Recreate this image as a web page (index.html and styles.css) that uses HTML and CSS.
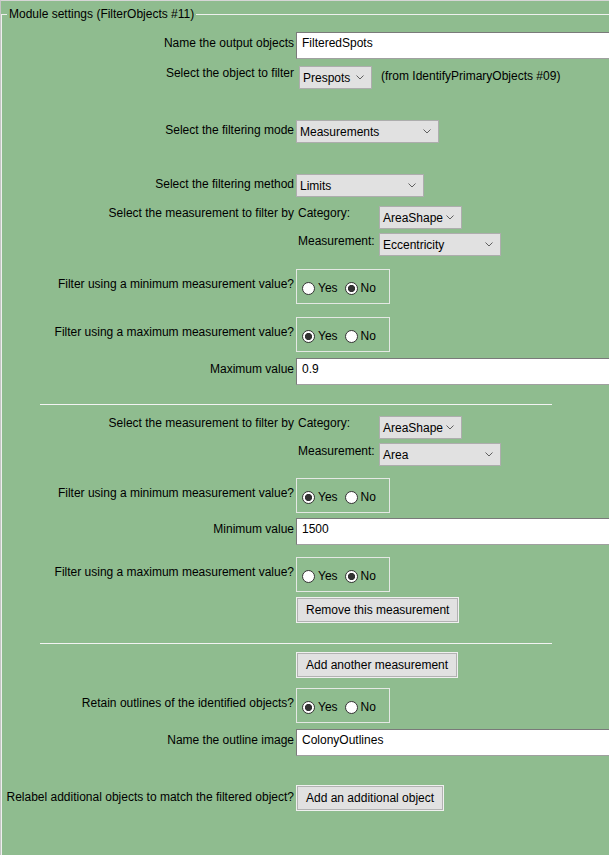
FILE: index.html
```html
<!DOCTYPE html>
<html>
<head>
<meta charset="utf-8">
<title>FilterObjects settings</title>
<link rel="stylesheet" href="styles.css">
</head>
<body>
<div class="panel">
  <fieldset class="settings">
    <legend class="legend">Module settings (FilterObjects #11)</legend>

    <div class="row sp-11 for-input">
      <div class="label">Name the output objects</div>
      <div class="textbox">FilteredSpots</div>
    </div>

    <div class="row sp-7 for-tight">
      <div class="label">Select the object to filter</div>
      <div class="inline">
        <div class="select w-prespots"><span>Prespots</span><svg class="chev" width="8" height="5" viewBox="0 0 8 5"><path d="M0.5 0.5 L4 4 L7.5 0.5"/></svg></div>
        <span class="note">(from IdentifyPrimaryObjects #09)</span>
      </div>
    </div>

    <div class="row sp-31 for-select">
      <div class="label">Select the filtering mode</div>
      <div class="select w-mode"><span>Measurements</span><svg class="chev" width="8" height="5" viewBox="0 0 8 5"><path d="M0.5 0.5 L4 4 L7.5 0.5"/></svg></div>
    </div>

    <div class="row sp-31 for-select">
      <div class="label">Select the filtering method</div>
      <div class="select w-method"><span>Limits</span><svg class="chev" width="8" height="5" viewBox="0 0 8 5"><path d="M0.5 0.5 L4 4 L7.5 0.5"/></svg></div>
    </div>

    <div class="row sp-9 for-picker">
      <div class="label">Select the measurement to filter by</div>
      <div class="picker">
        <div class="picker-label">Category:</div>
        <div class="select w-cat"><span>AreaShape</span><svg class="chev" width="8" height="5" viewBox="0 0 8 5"><path d="M0.5 0.5 L4 4 L7.5 0.5"/></svg></div>
        <div class="picker-label second">Measurement:</div>
        <div class="select w-meas"><span>Eccentricity</span><svg class="chev" width="8" height="5" viewBox="0 0 8 5"><path d="M0.5 0.5 L4 4 L7.5 0.5"/></svg></div>
      </div>
    </div>

    <div class="row sp-13 for-radio">
      <div class="label">Filter using a minimum measurement value?</div>
      <div class="radios"><span class="radio"><span class="dot"></span>Yes</span><span class="radio on"><span class="dot"></span>No</span></div>
    </div>

    <div class="row sp-13 for-radio">
      <div class="label">Filter using a maximum measurement value?</div>
      <div class="radios"><span class="radio on"><span class="dot"></span>Yes</span><span class="radio"><span class="dot"></span>No</span></div>
    </div>

    <div class="row sp-6 for-input">
      <div class="label">Maximum value</div>
      <div class="textbox">0.9</div>
    </div>

    <div class="divider sp-19"></div>

    <div class="row sp-11 for-picker">
      <div class="label">Select the measurement to filter by</div>
      <div class="picker">
        <div class="picker-label">Category:</div>
        <div class="select w-cat"><span>AreaShape</span><svg class="chev" width="8" height="5" viewBox="0 0 8 5"><path d="M0.5 0.5 L4 4 L7.5 0.5"/></svg></div>
        <div class="picker-label second">Measurement:</div>
        <div class="select w-meas"><span>Area</span><svg class="chev" width="8" height="5" viewBox="0 0 8 5"><path d="M0.5 0.5 L4 4 L7.5 0.5"/></svg></div>
      </div>
    </div>

    <div class="row sp-12 for-radio">
      <div class="label">Filter using a minimum measurement value?</div>
      <div class="radios"><span class="radio on"><span class="dot"></span>Yes</span><span class="radio"><span class="dot"></span>No</span></div>
    </div>

    <div class="row sp-5 for-input">
      <div class="label">Minimum value</div>
      <div class="textbox">1500</div>
    </div>

    <div class="row sp-12 for-radio">
      <div class="label">Filter using a maximum measurement value?</div>
      <div class="radios"><span class="radio"><span class="dot"></span>Yes</span><span class="radio on"><span class="dot"></span>No</span></div>
    </div>

    <div class="row sp-5">
      <div class="label"></div>
      <div class="button">Remove this measurement</div>
    </div>

    <div class="divider sp-20"></div>

    <div class="row sp-8">
      <div class="label"></div>
      <div class="button">Add another measurement</div>
    </div>

    <div class="row sp-10 for-radio">
      <div class="label">Retain outlines of the identified objects?</div>
      <div class="radios"><span class="radio on"><span class="dot"></span>Yes</span><span class="radio"><span class="dot"></span>No</span></div>
    </div>

    <div class="row sp-6 for-input">
      <div class="label">Name the outline image</div>
      <div class="textbox">ColonyOutlines</div>
    </div>

    <div class="row sp-29 for-button">
      <div class="label">Relabel additional objects to match the filtered object?</div>
      <div class="button">Add an additional object</div>
    </div>
  </fieldset>
</div>
</body>
</html>
```

FILE: styles.css
```css
html, body {
  margin: 0;
  padding: 0;
}

body {
  background: #8fbc8f;
  font-family: "Liberation Sans", Arial, sans-serif;
  font-size: 12px;
  line-height: 14px;
  color: #000;
  overflow: hidden;
}

.panel {
  width: 609px;
  height: 855px;
  box-sizing: border-box;
  border-top: 1px solid #d6d6d6;
  border-left: 1px solid #c4c4c4;
  padding-top: 6px;
  overflow: hidden;
}

.settings {
  margin: 0;
  padding: 0 0 80px 0;
  width: 720px;
  min-width: 0;
  box-sizing: border-box;
  border: 1px solid #eef0ee;
}

.legend {
  margin-left: 5px;
  padding: 0 2px;
  line-height: 14px;
}

.row {
  display: grid;
  grid-template-columns: 292px 1fr;
  column-gap: 2px;
  align-items: start;
}

.label {
  text-align: right;
  white-space: nowrap;
}

.for-input > .label { padding-top: 4px; }
.for-select > .label { padding-top: 3px; }
.for-tight > .label { padding-top: 0; }
.for-picker > .label { padding-top: 0; }
.for-radio > .label { padding-top: 8px; }
.for-button > .label { padding-top: 5px; }

.sp-5 { margin-top: 5px; }
.sp-6 { margin-top: 6px; }
.sp-7 { margin-top: 7px; }
.sp-8 { margin-top: 8px; }
.sp-9 { margin-top: 9px; }
.sp-10 { margin-top: 10px; }
.sp-11 { margin-top: 11px; }
.sp-12 { margin-top: 12px; }
.sp-13 { margin-top: 13px; }
.sp-19 { margin-top: 19px; }
.sp-20 { margin-top: 20px; }
.sp-29 { margin-top: 29px; }
.sp-31 { margin-top: 31px; }

.textbox {
  width: 340px;
  height: 27px;
  box-sizing: border-box;
  background: #fff;
  border: 1px solid #7a7a7a;
  border-bottom-color: #a0a0a0;
  padding: 3px 5px 0;
}

.inline {
  display: flex;
  align-items: center;
}

.select {
  height: 23px;
  box-sizing: border-box;
  background: #e1e1e1;
  border: 1px solid #adadad;
  padding: 0 7px 0 3px;
  display: flex;
  align-items: center;
  justify-content: space-between;
}

.select span {
  padding-top: 1px;
}

.chev path {
  fill: none;
  stroke: #5f5f5f;
  stroke-width: 1;
}

.w-prespots { width: 73px; margin-left: 3px; }
.w-mode { width: 143px; }
.w-method { width: 128px; }
.w-cat { width: 83px; }
.w-meas { width: 122px; }

.note {
  margin-left: 9px;
  padding-bottom: 3px;
}

.picker {
  display: grid;
  grid-template-columns: 81px auto;
  row-gap: 4px;
  justify-content: start;
  align-items: start;
  padding-left: 2px;
}

.picker-label.second {
  padding-top: 1px;
}

.radios {
  width: 94px;
  height: 35px;
  box-sizing: border-box;
  border: 1px solid #e4e8e4;
  display: flex;
  align-items: center;
  gap: 7px;
  padding: 3px 0 0 5px;
}

.radio {
  display: inline-flex;
  align-items: center;
  gap: 3px;
}

.dot {
  width: 13px;
  height: 13px;
  box-sizing: border-box;
  border-radius: 50%;
  border: 1px solid #333;
  background: #fff;
}

.radio.on .dot {
  background: radial-gradient(circle, #333 0 3.3px, #fff 3.9px);
}

.button {
  justify-self: start;
  height: 26px;
  box-sizing: border-box;
  padding: 0 9px;
  background: #e1e1e1;
  border: 1px solid #f0f0f0;
  box-shadow: inset 0 0 0 1px #b2b2b2;
  display: flex;
  align-items: center;
  white-space: nowrap;
}

.divider {
  margin-left: 38px;
  width: 512px;
  height: 1px;
  background: #f3f3f3;
}
```
